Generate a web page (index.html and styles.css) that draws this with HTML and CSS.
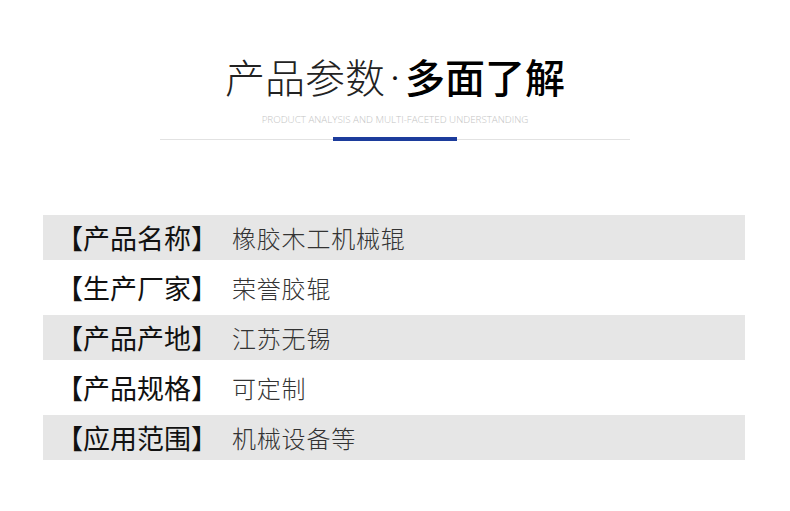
FILE: index.html
```html
<!DOCTYPE html>
<html lang="zh">
<head>
<meta charset="utf-8">
<link rel="stylesheet" href="styles.css">
</head>
<body>
<div class="page">
  <header class="head">
    <h1 class="title"><span class="thin">产品参数</span><span class="dot">·</span><span class="bold">多面了解</span></h1>
    <p class="sub">PRODUCT ANALYSIS AND MULTI-FACETED UNDERSTANDING</p>
    <div class="rule"><span class="bar"></span></div>
  </header>
  <div class="table">
    <div class="row alt"><span class="label">【产品名称】</span><span class="value">橡胶木工机械辊</span></div>
    <div class="row"><span class="label">【生产厂家】</span><span class="value">荣誉胶辊</span></div>
    <div class="row alt"><span class="label">【产品产地】</span><span class="value">江苏无锡</span></div>
    <div class="row"><span class="label">【产品规格】</span><span class="value">可定制</span></div>
    <div class="row alt"><span class="label">【应用范围】</span><span class="value">机械设备等</span></div>
  </div>
</div>
</body>
</html>
```

FILE: styles.css
```css
html, body {
  margin: 0;
  padding: 0;
  background: #fff;
}
.page {
  width: 790px;
  height: 511px;
  font-family: "Noto Sans CJK SC", "Noto Sans", sans-serif;
}
.head {
  padding-top: 52px;
  display: flex;
  flex-direction: column;
  align-items: center;
}
.title {
  margin: 0;
  font-size: 40px;
  line-height: 48px;
  height: 48px;
  font-weight: 400;
  color: #111;
  display: flex;
  align-items: flex-start;
}
.thin {
  font-weight: 300;
  color: #222;
}
.dot {
  font-weight: 300;
  width: 20px;
  text-align: center;
  font-size: 20px;
  line-height: 44px;
  padding-top: 4px;
}
.bold {
  font-weight: 500;
  color: #000;
}
.sub {
  margin: 14px 0 0;
  font-family: "Open Sans", "Liberation Sans", sans-serif;
  font-weight: 300;
  font-size: 9.8px;
  line-height: 12px;
  color: #c4c4c4;
}
.rule {
  margin-top: 11px;
  width: 470px;
  height: 4px;
  display: flex;
  justify-content: center;
  align-items: center;
  background: linear-gradient(to bottom, transparent 2px, #e2e2e2 2px, #e2e2e2 3px, transparent 3px);
}
.bar {
  width: 124px;
  height: 4px;
  background: #1c3c9c;
}
.table {
  margin: 74px 0 0 43px;
  width: 702px;
  display: flex;
  flex-direction: column;
  gap: 5px;
}
.row {
  height: 45px;
  display: flex;
  align-items: center;
}
.row.alt {
  background: #e6e6e6;
}
.label {
  width: 189px;
  padding-left: 13px;
  box-sizing: border-box;
  font-size: 27px;
  color: #111;
  white-space: nowrap;
}
.value {
  font-size: 24px;
  font-weight: 300;
  color: #333;
  letter-spacing: 0.8px;
}
```
